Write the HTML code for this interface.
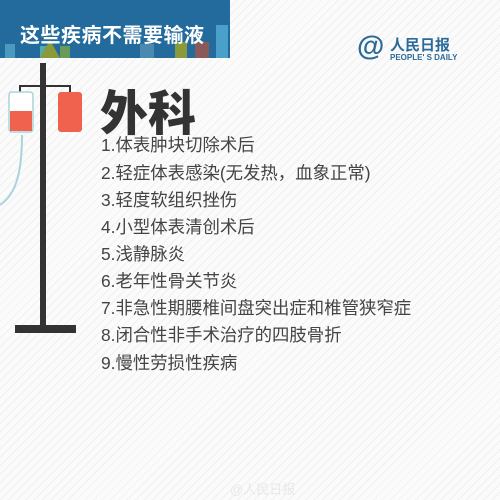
<!DOCTYPE html>
<html><head><meta charset="utf-8"><style>
body{margin:0;width:500px;height:500px;overflow:hidden;position:relative;font-family:"Liberation Sans","Noto Sans CJK SC",sans-serif;
background:#fbfbfb repeating-linear-gradient(135deg,#fbfbfb 0 5px,#f0f0f0 5px 6px);}
.hd{position:absolute;left:0;top:0;width:230px;height:58px;background:#236b9c;}
.hd span{position:absolute;left:20px;top:19px;color:#fff;font-weight:bold;font-size:20px;letter-spacing:0.5px;}
.t{position:absolute;left:100px;top:74px;font-size:48px;font-weight:900;color:#333;}
.l{position:absolute;left:101px;font-size:17.4px;color:#444;white-space:nowrap;}
</style></head><body>
<div class="hd">
<svg width="230" height="58" style="position:absolute;left:0;top:0">
<rect x="5" y="44" width="10" height="14" fill="#4a9ac0"/><rect x="40" y="46" width="8" height="12" fill="#5aa"/>
<path d="M40 58 L50 40 L60 58Z" fill="#8a9a3a"/><rect x="60" y="46" width="10" height="12" fill="#6a9a5a"/>
<rect x="140" y="44" width="14" height="14" fill="#4a8ab0"/><rect x="175" y="42" width="12" height="16" fill="#8a9a3a"/><rect x="195" y="42" width="14" height="16" fill="#8a5a5a"/><rect x="216" y="25" width="12" height="33" fill="#4aa0c8"/>
</svg>
<span>这些疾病不需要输液</span></div>
<svg width="100" height="340" style="position:absolute;left:0;top:0">
<path d="M22 135 C22 175 15 195 0 205" stroke="#a8d4dc" stroke-width="2" fill="none"/>
<rect x="40" y="63" width="6" height="265" fill="#333"/>
<rect x="15" y="325" width="61" height="8" fill="#333"/>
<path d="M20 93 V86 H70 V93" stroke="#333" stroke-width="2" fill="none"/>
<rect x="9" y="92" width="24" height="40" rx="3" fill="#fff" stroke="#a8d4dc" stroke-width="1.5"/>
<rect x="10" y="111" width="22" height="20" fill="#f0614e"/>
<rect x="58" y="92" width="24" height="40" rx="3" fill="#f0614e"/>
</svg>
<div class="t">外科</div>
<div class="l" style="top:132px">1.体表肿块切除术后</div>
<div class="l" style="top:160px">2.轻症体表感染(无发热，血象正常)</div>
<div class="l" style="top:187px">3.轻度软组织挫伤</div>
<div class="l" style="top:214px">4.小型体表清创术后</div>
<div class="l" style="top:241px">5.浅静脉炎</div>
<div class="l" style="top:268px">6.老年性骨关节炎</div>
<div class="l" style="top:295px">7.非急性期腰椎间盘突出症和椎管狭窄症</div>
<div class="l" style="top:322px">8.闭合性非手术治疗的四肢骨折</div>
<div class="l" style="top:350px">9.慢性劳损性疾病</div>
<div style="position:absolute;left:357px;top:30px;color:#2a6a9a;font-size:28px;font-weight:bold">@</div>
<div style="position:absolute;left:390px;top:34px;color:#2a6a9a;font-size:15px;font-weight:bold">人民日报</div>
<div style="position:absolute;left:390px;top:53px;color:#2a6a9a;font-size:8px;font-weight:bold">PEOPLE' S DAILY</div>
<div style="position:absolute;left:230px;top:479px;color:#e8e8e8;font-size:13px">@人民日报</div>
</body></html>
